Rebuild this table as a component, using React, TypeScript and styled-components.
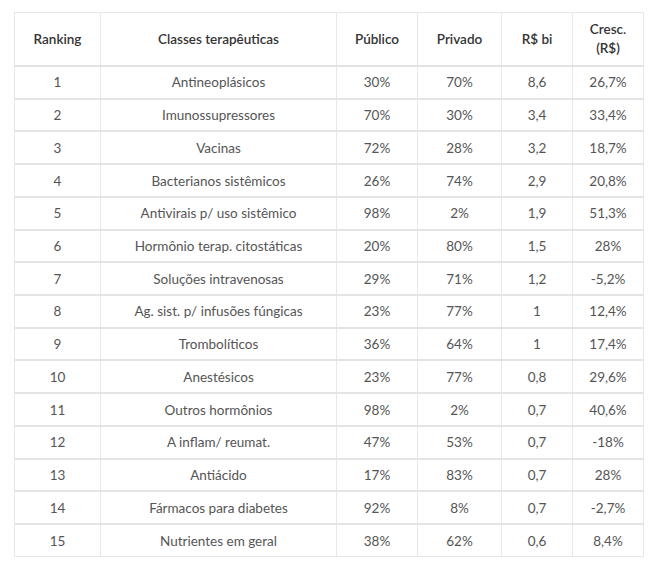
import React from 'react';
import styled, { createGlobalStyle } from 'styled-components';

const GlobalStyle = createGlobalStyle`
  html, body {
    margin: 0;
    padding: 0;
    background: #ffffff;
  }
  body {
    font-family: Lato, "Open Sans", "Liberation Sans", sans-serif;
  }
`;

type Row = [string, string, string, string, string];

const rows: Row[] = [
  ['Antineoplásicos', '30%', '70%', '8,6', '26,7%'],
  ['Imunossupressores', '70%', '30%', '3,4', '33,4%'],
  ['Vacinas', '72%', '28%', '3,2', '18,7%'],
  ['Bacterianos sistêmicos', '26%', '74%', '2,9', '20,8%'],
  ['Antivirais p/ uso sistêmico', '98%', '2%', '1,9', '51,3%'],
  ['Hormônio terap. citostáticas', '20%', '80%', '1,5', '28%'],
  ['Soluções intravenosas', '29%', '71%', '1,2', '-5,2%'],
  ['Ag. sist. p/ infusões fúngicas', '23%', '77%', '1', '12,4%'],
  ['Trombolíticos', '36%', '64%', '1', '17,4%'],
  ['Anestésicos', '23%', '77%', '0,8', '29,6%'],
  ['Outros hormônios', '98%', '2%', '0,7', '40,6%'],
  ['A inflam/ reumat.', '47%', '53%', '0,7', '-18%'],
  ['Antiácido', '17%', '83%', '0,7', '28%'],
  ['Fármacos para diabetes', '92%', '8%', '0,7', '-2,7%'],
  ['Nutrientes em geral', '38%', '62%', '0,6', '8,4%'],
];

const widths = [86, 236, 81, 84, 71, 71];

const Page = styled.div`
  padding: 12px 14px;
`;

const Table = styled.table`
  width: 629px;
  border-collapse: collapse;
  table-layout: fixed;
  border: 1px solid #e6e6e6;
`;

const HeadCell = styled.th`
  height: 52px;
  padding: 0 6px;
  font-size: 13.5px;
  font-weight: 600;
  line-height: 19px;
  color: #333333;
  text-align: center;
  border-left: 1px solid #e8e8e8;
  border-bottom: 2px solid #e2e2e2;
`;

const BodyRow = styled.tr`
  height: 32.73px;
  border-bottom: 2px solid #e4e4e4;

  &:last-child {
    border-bottom: 1px solid #e6e6e6;
  }
`;

const Cell = styled.td`
  padding: 0 6px;
  font-size: 13.5px;
  color: #555555;
  text-align: center;
  border-left: 1px solid #e8e8e8;
  white-space: nowrap;
`;

const App: React.FC = () => {
  return (
    <>
      <GlobalStyle />
      <Page>
        <Table>
          <colgroup>
            {widths.map((w, i) => (
              <col key={i} style={{ width: w }} />
            ))}
          </colgroup>
          <thead>
            <tr>
              <HeadCell>Ranking</HeadCell>
              <HeadCell>Classes terapêuticas</HeadCell>
              <HeadCell>Público</HeadCell>
              <HeadCell>Privado</HeadCell>
              <HeadCell>R$ bi</HeadCell>
              <HeadCell>
                Cresc.
                <br />
                (R$)
              </HeadCell>
            </tr>
          </thead>
          <tbody>
            {rows.map((row, i) => (
              <BodyRow key={i}>
                <Cell>{i + 1}</Cell>
                {row.map((value, j) => (
                  <Cell key={j}>{value}</Cell>
                ))}
              </BodyRow>
            ))}
          </tbody>
        </Table>
      </Page>
    </>
  );
};

export default App;
